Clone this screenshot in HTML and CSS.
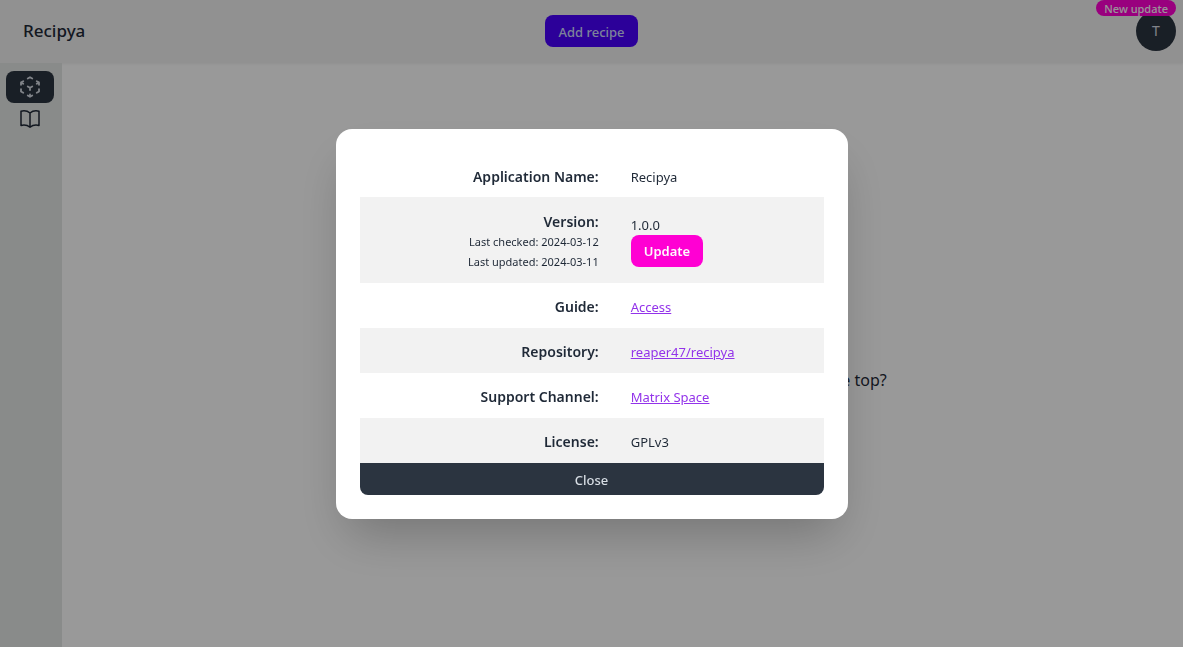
FILE: index.html
```html
<!DOCTYPE html>
<html lang="en">
<head>
<meta charset="utf-8">
<title>Recipya</title>
<link rel="stylesheet" href="styles.css">
</head>
<body>
<header class="navbar">
  <a class="brand" href="#">Recipya</a>
  <button class="btn btn-primary" type="button">Add recipe</button>
  <div class="account">
    <button class="avatar" type="button">T</button>
    <span class="badge">New update</span>
  </div>
</header>
<div class="page">
  <nav class="sidebar">
    <a class="side-link active" href="#" aria-label="Recipes">
      <svg viewBox="0 0 24 24"><path d="m21 7.5-2.25-1.313M21 7.5v2.25m0-2.25-2.25 1.313M3 7.5l2.25-1.313M3 7.5l2.25 1.313M3 7.5v2.25m9 3 2.25-1.313M12 12.75l-2.25-1.313M12 12.75V15m0 6.75 2.25-1.313M12 21.75V19.5m0 2.25-2.25-1.313m0-16.875L12 2.25l2.25 1.313M21 14.25v2.25l-2.25 1.313m-13.5 0L3 16.5v-2.25"/></svg>
    </a>
    <a class="side-link" href="#" aria-label="Cookbooks">
      <svg viewBox="0 0 24 24"><path d="M12 6.042A8.967 8.967 0 0 0 6 3.75c-1.052 0-2.062.18-3 .512v14.25A8.987 8.987 0 0 1 6 18c2.305 0 4.408.867 6 2.292m0-14.25a8.966 8.966 0 0 1 6-2.292c1.052 0 2.062.18 3 .512v14.25A8.987 8.987 0 0 0 18 18a8.967 8.967 0 0 0-6 2.292m0-14.25v14.25"/></svg>
    </a>
  </nav>
  <main class="content">
    <p>Why not start by adding a new recipe by clicking the button at the top?</p>
  </main>
</div>
<div class="backdrop">
  <div class="modal" role="dialog" aria-modal="true" aria-label="About">
    <table class="info">
      <tr><th scope="row">Application Name:</th><td>Recipya</td></tr>
      <tr class="version"><th scope="row">Version:<small>Last checked: 2024-03-12</small><small>Last updated: 2024-03-11</small></th><td>1.0.0<br><button class="btn btn-secondary" type="button">Update</button></td></tr>
      <tr><th scope="row">Guide:</th><td><a href="#">Access</a></td></tr>
      <tr><th scope="row">Repository:</th><td><a href="#">reaper47/recipya</a></td></tr>
      <tr><th scope="row">Support Channel:</th><td><a href="#">Matrix Space</a></td></tr>
      <tr><th scope="row">License:</th><td>GPLv3</td></tr>
    </table>
    <button class="btn btn-close" type="button">Close</button>
  </div>
</div>
</body>
</html>
```
FILE: styles.css
```css
* { box-sizing: border-box; }
body {
  margin: 0;
  min-height: 100vh;
  display: flex;
  flex-direction: column;
  font: 16px/24px "Noto Sans", "Open Sans", sans-serif;
  color: #1f2937;
  background: #fff;
}
.navbar {
  display: grid;
  grid-template-columns: 1fr auto 1fr;
  align-items: center;
  height: 63px;
  padding: 0 7px 1px;
  background: #f2f2f2;
  box-shadow: 0 1px 2px rgba(0, 0, 0, .06);
}
.brand { padding-left: 16px; color: inherit; text-decoration: none; font-size: 17px; font-weight: 500; }
.btn {
  height: 32px;
  padding: 1px 13px 0;
  border: 0;
  border-radius: 8px;
  font: 500 13px/16px "Noto Sans", "Open Sans", sans-serif;
}
.btn-primary { background: #4a00ff; color: #d1dbff; }
.btn-secondary { display: block; background: #ff00d3; color: #fff8fd; font-weight: 600; }
.account { justify-self: end; position: relative; }
.avatar {
  display: block;
  width: 40px;
  height: 40px;
  padding: 0;
  border: 0;
  border-radius: 50%;
  background: #2b3440;
  color: #d7dde4;
  font: 14px/20px "Noto Sans", "Open Sans", sans-serif;
}
.badge {
  position: absolute;
  top: -11px;
  right: 0;
  height: 16px;
  padding: 0 8px;
  border-radius: 8px;
  background: #ff00d3;
  color: #fff8fd;
  font-size: 11px;
  font-weight: 500;
  line-height: 17px;
  white-space: nowrap;
}
.page { flex: 1; display: flex; }
.sidebar { width: 62px; padding: 8px 6px; background: #e5e8e6; }
.side-link {
  display: flex;
  align-items: center;
  justify-content: center;
  width: 48px;
  height: 32px;
  border-radius: 8px;
  color: #1f2937;
}
.side-link.active { background: #2b3440; color: #d7dde4; }
.side-link svg { width: 24px; height: 24px; fill: none; stroke: currentColor; stroke-width: 1.5; stroke-linecap: round; stroke-linejoin: round; }
.side-link.active svg { stroke-width: 1.8; }
.content { flex: 1; display: flex; align-items: center; justify-content: center; padding-top: 50px; text-align: center; }
.content p { margin: 0; }
.backdrop {
  position: fixed;
  inset: 0;
  display: flex;
  align-items: center;
  justify-content: center;
  background: rgba(0, 0, 0, .4);
}
.modal {
  width: 512px;
  max-width: 92vw;
  padding: 24px;
  border-radius: 16px;
  background: #fff;
  box-shadow: 0 25px 50px -12px rgba(0, 0, 0, .25);
}
.info { width: 100%; border-collapse: collapse; font-size: 13px; line-height: 20px; }
.info th, .info td { padding: 14px 16px 10px; vertical-align: middle; }
.info tr + tr { height: 45px; }
.info th { width: 55%; text-align: right; font-size: 14px; font-weight: 600; }
.info td { font-weight: 400; }
.info .version th { padding: 15px 16px 11px; }
.info .version td { padding: 13px 16px 11px; }
.info tr:nth-child(even) { background: #f2f2f2; }
.info small { display: block; font-size: 11px; font-weight: 400; }
.info a { color: #9333ea; }
.btn-close { display: block; width: 100%; padding-top: 2px; border-radius: 0 0 8px 8px; background: #2b3440; color: #d7dde4; }
```
